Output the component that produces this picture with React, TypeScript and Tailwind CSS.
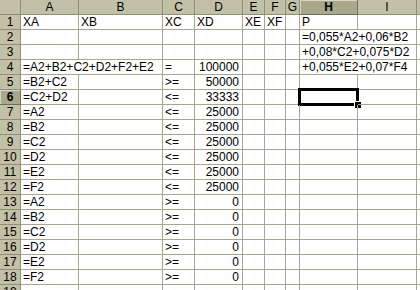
type Cell = { v: string; right?: boolean; span?: number };
type Row = Partial<Record<string, Cell>>;

const COLS = ["A", "B", "C", "D", "E", "F", "G", "H", "I", "J"];
const VARS = ["A", "B", "C", "D", "E", "F"];

const rows: Row[] = [
  { A: { v: "XA" }, B: { v: "XB" }, C: { v: "XC" }, D: { v: "XD" }, E: { v: "XE" }, F: { v: "XF" }, H: { v: "P" } },
  { H: { v: "=0,055*A2+0,06*B2", span: 2 } },
  { H: { v: "+0,08*C2+0,075*D2", span: 2 } },
  {
    A: { v: "=A2+B2+C2+D2+F2+E2", span: 2 },
    C: { v: "=" },
    D: { v: "100000", right: true },
    H: { v: "+0,055*E2+0,07*F4", span: 2 },
  },
  { A: { v: "=B2+C2" }, C: { v: ">=" }, D: { v: "50000", right: true } },
  { A: { v: "=C2+D2" }, C: { v: "<=" }, D: { v: "33333", right: true } },
  ...VARS.map((x) => ({ A: { v: `=${x}2` }, C: { v: "<=" }, D: { v: "25000", right: true } })),
  ...VARS.map((x) => ({ A: { v: `=${x}2` }, C: { v: ">=" }, D: { v: "0", right: true } })),
  {},
];

const SEL_ROW = 6;
const SEL_COL = "H";

function HeadCell({ label, active }: { label: string; active?: boolean }) {
  return (
    <div
      className={
        active
          ? "bg-[#a9a78c] border-r border-b border-[#6f6e5c] shadow-[inset_1px_1px_0_#d8d7c6] font-bold text-center leading-[13px] pt-px overflow-hidden"
          : "bg-[#c2c0a6] border-r border-b border-[#8f8e78] text-center leading-[13px] pt-px overflow-hidden"
      }
    >
      {label}
    </div>
  );
}

export default function App() {
  return (
    <div
      className="w-[420px] h-[290px] overflow-hidden bg-white text-black text-[12px]"
      style={{ fontFamily: '"Liberation Sans", Arial, sans-serif' }}
    >
      <div className="grid grid-cols-[21px_58px_84px_32px_48px_22px_21px_14px_58px_59px_60px] auto-rows-[15px]">
        {/* column headers; J is only a sliver at the right edge */}
        <div className="bg-[#c2c0a6] border-r border-b border-[#8f8e78]" />
        {COLS.map((c) => (
          <HeadCell key={c} label={c === "J" ? "" : c} active={c === SEL_COL} />
        ))}

        {rows.map((row, i) => {
          const n = i + 1;
          const cells = [];
          for (let k = 0; k < COLS.length; k++) {
            const col = COLS[k];
            const cell = row[col];
            const span = cell?.span ?? 1;
            const selected = n === SEL_ROW && col === SEL_COL;
            cells.push(
              <div
                key={col}
                className={
                  (span === 2 ? "col-span-2 " : "") +
                  "relative border-r border-b border-[#a7a68e] whitespace-nowrap leading-[13px] pt-px " +
                  (cell?.right ? "text-right pr-[3px]" : "pl-[2px]")
                }
              >
                {cell?.v}
                {selected && (
                  <>
                    <div className="absolute -left-[2px] -top-[2px] w-[61px] h-[18px] border-[3px] border-black" />
                    <div className="absolute left-[54px] top-[11px] w-[7px] h-[7px] bg-black border-l border-t border-white" />
                  </>
                )}
              </div>
            );
            k += span - 1;
          }
          return [
            <HeadCell key={`h${n}`} label={String(n)} active={n === SEL_ROW} />,
            ...cells,
          ];
        })}
      </div>
    </div>
  );
}
